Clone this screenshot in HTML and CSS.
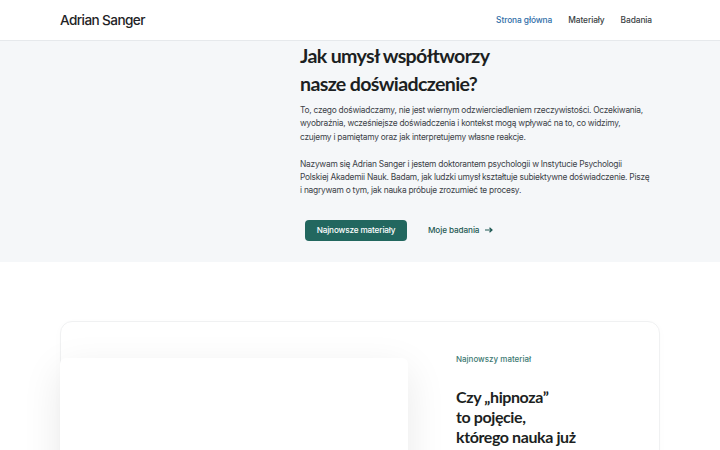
FILE: index.html
```html
<!DOCTYPE html>
<html lang="pl">
<head>
<meta charset="utf-8">
<title>Adrian Sanger</title>
<link rel="stylesheet" href="styles.css">
</head>
<body>
<header class="site-header">
  <div class="container header-inner">
    <a class="logo" href="#">Adrian Sanger</a>
    <nav class="main-nav">
      <a class="nav-link is-active" href="#">Strona główna</a>
      <a class="nav-link" href="#">Materiały</a>
      <a class="nav-link" href="#">Badania</a>
    </nav>
  </div>
</header>

<section class="hero">
  <div class="container hero-grid">
    <div class="hero-media"></div>
    <div class="hero-content">
      <h1 class="hero-title">Jak umysł współtworzy<br>nasze doświadczenie?</h1>
      <p class="hero-text">To, czego doświadczamy, nie jest wiernym odzwierciedleniem rzeczywistości. Oczekiwania, wyobraźnia, wcześniejsze doświadczenia i kontekst mogą wpływać na to, co widzimy, czujemy i pamiętamy oraz jak interpretujemy własne reakcje.</p>
      <p class="hero-text">Nazywam się Adrian Sanger i jestem doktorantem psychologii w Instytucie Psychologii Polskiej Akademii Nauk. Badam, jak ludzki umysł kształtuje subiektywne doświadczenie. Piszę i nagrywam o tym, jak nauka próbuje zrozumieć te procesy.</p>
      <div class="hero-actions">
        <a class="btn-primary" href="#">Najnowsze materiały</a>
        <a class="link-arrow" href="#">Moje badania <span class="arrow">
          <svg width="8" height="6" viewBox="0 0 8 6"><path d="M0 3h6.5M4.5 0.8L7 3 4.5 5.2" fill="none" stroke="currentColor" stroke-width="1.2"/></svg>
        </span></a>
      </div>
    </div>
  </div>
</section>

<section class="latest">
  <div class="container">
    <article class="feature-card">
      <div class="feature-media"></div>
      <div class="feature-body">
        <p class="feature-label">Najnowszy materiał</p>
        <h2 class="feature-title">Czy „hipnoza”<br>to pojęcie,<br>którego nauka już</h2>
      </div>
    </article>
  </div>
</section>
</body>
</html>
```

FILE: styles.css
```css
* {
  box-sizing: border-box;
}

html, body {
  margin: 0;
  padding: 0;
  background: #ffffff;
}

body {
  font-family: Inter, "Noto Sans", sans-serif;
  color: #2b2f33;
  overflow: hidden;
}

a {
  text-decoration: none;
  color: inherit;
}

.container {
  width: 600px;
  margin: 0 auto;
}

/* Header */
.site-header {
  height: 41px;
  background: #ffffff;
  border-bottom: 1px solid #e6e9ec;
}

.header-inner {
  height: 40px;
  display: flex;
  align-items: center;
  justify-content: space-between;
}

.logo {
  font-size: 13.6px;
  font-weight: 500;
  letter-spacing: -0.6px;
  color: #1f2326;
}

.main-nav {
  display: flex;
  gap: 16px;
  padding-right: 8px;
}

.nav-link {
  font-size: 8.4px;
  font-weight: 500;
  letter-spacing: -0.1px;
  color: #3a3f44;
}

.nav-link.is-active {
  color: #2f6ea8;
}

/* Hero */
.hero {
  background: #f5f7f9;
  height: 221px;
}

.hero-grid {
  display: grid;
  grid-template-columns: 240px 1fr;
}

.hero-content {
  padding-top: 1px;
}

.hero-title {
  font-family: Lato, sans-serif;
  font-weight: 700;
  font-size: 19.6px;
  line-height: 28px;
  letter-spacing: -0.65px;
  color: #1c1f22;
  margin: 0 0 6px;
}

.hero-text {
  max-width: 351px;
  font-size: 8.4px;
  line-height: 13.4px;
  letter-spacing: -0.25px;
  color: #3c4248;
  margin: 0 0 13.4px;
}

.hero-actions {
  display: flex;
  align-items: center;
  gap: 21px;
  margin-top: 22px;
  padding-left: 5px;
}

.btn-primary {
  display: inline-flex;
  align-items: center;
  justify-content: center;
  width: 102px;
  height: 21px;
  border-radius: 4px;
  background: #22675f;
  color: #ffffff;
  font-size: 8.2px;
  font-weight: 500;
  letter-spacing: -0.15px;
}

.link-arrow {
  display: inline-flex;
  align-items: center;
  gap: 6px;
  font-size: 8.2px;
  font-weight: 500;
  letter-spacing: -0.1px;
  color: #1f5a54;
}

.arrow {
  display: inline-flex;
}

/* Latest material */
.latest {
  padding-top: 59px;
}

.feature-card {
  display: grid;
  grid-template-columns: 347px 1fr;
  column-gap: 48px;
  height: 200px;
  padding-top: 32px;
  border: 1px solid #f0f1f2;
  border-radius: 12px;
  box-shadow: 0 2px 10px rgba(0, 0, 0, 0.02);
}

.feature-media {
  height: 220px;
  margin-top: 4px;
  margin-left: -1px;
  background: #ffffff;
  border-radius: 6px 6px 0 0;
  box-shadow: 0 12px 40px rgba(0, 0, 0, 0.09);
}

.feature-label {
  font-size: 8px;
  font-weight: 500;
  color: #3e7a73;
  margin: 0 0 23px;
}

.feature-title {
  font-family: Lato, sans-serif;
  font-weight: 700;
  font-size: 16px;
  line-height: 20px;
  letter-spacing: -0.4px;
  color: #1c1f22;
  margin: 0;
}
```
